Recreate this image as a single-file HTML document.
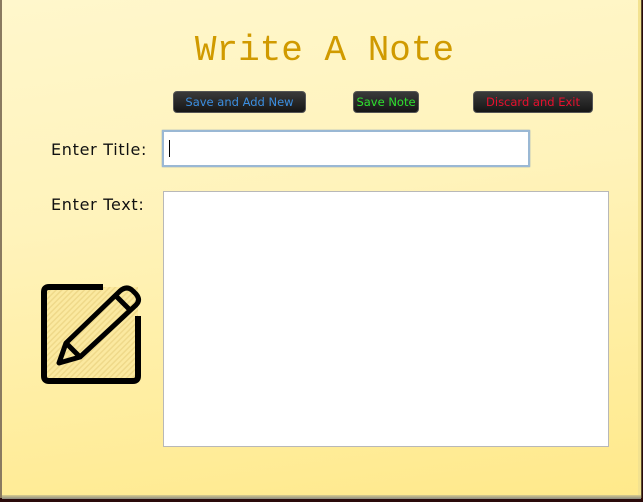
<!DOCTYPE html>
<html><head><meta charset="utf-8"><style>
html,body{margin:0;padding:0;width:643px;height:502px;overflow:hidden;background:#2a0a0a;}
.win{position:absolute;left:0;top:0;width:641px;height:498px;background:linear-gradient(172deg,#fff7cc 0%,#fff3bb 40%,#ffe98a 100%);border-left:2px solid #8a7a60;box-sizing:border-box;}
.shadow{position:absolute;left:2px;top:495px;width:639px;height:4px;background:linear-gradient(#d8cc90,#8a8a80);}
.rs{position:absolute;left:638px;top:0;width:3px;height:498px;background:#f3e290;border-right:1px solid #5a4a30;}
h1{position:absolute;left:0;top:30px;width:643px;margin:0;text-align:center;font:36px "Liberation Mono",monospace;color:#d09a00;}
.btn{position:absolute;top:91px;height:22px;border-radius:4px;background:linear-gradient(#3a3a3a,#161616);border:1px solid #555;box-sizing:border-box;font:11.5px "DejaVu Sans",sans-serif;text-align:center;line-height:20px;white-space:nowrap;}
.lbl{position:absolute;font:16px "DejaVu Sans",sans-serif;letter-spacing:0.7px;color:#111;}
.in{position:absolute;background:#fff;box-sizing:border-box;}
</style></head><body>
<div class="win"></div>
<div class="rs"></div>
<div class="shadow"></div>
<h1 style="left:3px">Write A Note</h1>
<div class="btn" style="left:173px;width:133px;color:#3b8ee0;">Save and Add New</div>
<div class="btn" style="left:353px;width:66px;color:#2ee02e;">Save Note</div>
<div class="btn" style="left:473px;width:120px;color:#e8102e;">Discard and Exit</div>
<div class="lbl" style="left:51px;top:140px;">Enter Title:</div>
<div class="lbl" style="left:51px;top:195px;">Enter Text:</div>
<div class="in" style="left:162px;top:130px;width:368px;height:37px;border:2px solid #9ab8d4;box-shadow:0 0 1px #6a90b8;"><div style="position:absolute;left:5px;top:8px;width:1px;height:17px;background:#000"></div></div>
<div class="in" style="left:163px;top:191px;width:446px;height:256px;border:1px solid #b8b8b8;"></div>
<svg style="position:absolute;left:38px;top:282px" width="108" height="106" viewBox="38 282 108 106">
<defs><pattern id="h" width="4" height="4" patternUnits="userSpaceOnUse" patternTransform="rotate(45)"><rect width="4" height="4" fill="#fbe9a0"/><rect width="1.5" height="4" fill="#efd98a"/></pattern></defs>
<rect x="44" y="287" width="94" height="93" fill="url(#h)"/>
<path d="M103 287 H49 Q44 287 44 292 V376 Q44 381 49 381 H133 Q138 381 138 376 V316" fill="none" stroke="#000" stroke-width="6"/>
<path d="M66 343 L120 291 Q127 285 133 291 L136 294 Q141 300 136 305 L80 357 L59 363 Z" fill="none" stroke="#000" stroke-width="5" stroke-linejoin="round"/>
<path d="M116 296 L130 310 M67 344 L79 356" stroke="#000" stroke-width="5" fill="none"/>
</svg>
</body></html>
